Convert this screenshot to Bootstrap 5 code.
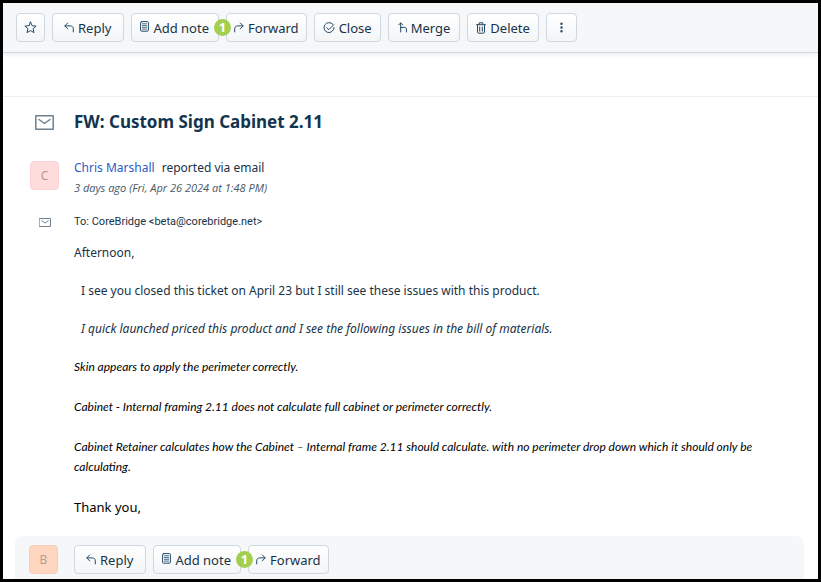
<!DOCTYPE html>
<html lang="en">
<head>
<meta charset="utf-8">
<meta name="viewport" content="width=device-width, initial-scale=1">
<title>FW: Custom Sign Cabinet 2.11</title>
<link href="https://cdn.jsdelivr.net/npm/bootstrap@5.3.0/dist/css/bootstrap.min.css" rel="stylesheet">
<style>
body { font-family: "Noto Sans", "Open Sans", sans-serif; font-size: 12px; line-height: 20px; color: #183247; }
.frame { border: 3px solid #000; }
.toolbar { background: #f5f7f9; border-bottom: 1px solid #cfd7df; box-shadow: 0 2px 4px rgba(24,50,71,.08); padding: 10px 13px; }
.subbar { height: 44px; border-bottom: 1px solid #ebeff3; }
.btn-tool { display: inline-flex; align-items: center; gap: 4px; height: 29px; padding: 0 8px; font-size: 13px; line-height: 20px; color: #183247; background: linear-gradient(#fff, #f3f5f7); border: 1px solid #cfd7df; border-radius: 4px; white-space: nowrap; }
.btn-tool:hover { color: #183247; border-color: #9fb0c0; background: #ebeff3; }
.btn-reply { padding: 0 12px 0 11px; }
.btn-fwd { padding: 0 7px; }
.btn-note { padding-right: 9px; }
.btn-wide { padding: 0 9px; }
.btn-icon { padding: 0 7px; }
.btn-tool svg, .glyph svg { display: block; fill: none; stroke: #264966; stroke-width: 1; stroke-linecap: round; stroke-linejoin: round; }
.btn-note svg { margin-bottom: 2px; }
.tools { gap: 7px; }
.count { position: absolute; right: -12px; top: 6px; z-index: 2; width: 17px; height: 17px; border-radius: 50%; background: #a3cf4e; color: #fff; font-size: 13px; line-height: 17px; font-weight: 700; text-align: center; }
.gutter { width: 29px; }
.ticket { padding: 13px 27px 0; }
.line { gap: 15px; }
.subject { font-size: 17px; line-height: 24px; font-weight: 700; color: #12344d; }
.avatar { width: 29px; height: 29px; border: 1px solid #f8d2d5; border-radius: 4px; background: #ffdcdc; color: #b09a9e; font-size: 12px; }
.avatar-b { border-color: #f5cdb8; background: #ffd7c0; color: #b89e90; }
.person { color: #2c5cc5; text-decoration: none; }
.stamp { font-family: "Open Sans", sans-serif; font-size: 11px; color: #475867; }
.origin { margin-bottom: 14px; }
.origin .gutter { padding-top: 3px; }
.addr { font-family: Roboto, sans-serif; font-size: 11px; margin-bottom: 11px; }
.glyph svg { stroke: #6f8090; }
.message p { margin: 0 0 18px; }
.message p.quoted { font-family: Lato, sans-serif; margin-bottom: 20px; color: #000; }
.message .inset { padding-left: 7px; }
.message p.closing { font-size: 13px; margin-bottom: 19px; color: #000; }
.replybar { background: #f5f7f9; border-radius: 8px 8px 0 0; margin: 0 14px 0 12px; padding: 9px 14px 4px; gap: 16px; }
</style>
</head>
<body>
<svg class="d-none" aria-hidden="true">
  <symbol id="i-reply" viewBox="0 0 10 11"><path d="M3.7 1 .8 3.9l2.9 3M1 3.9h5.2c2 0 3.1 1 3.1 3v3"/></symbol>
  <symbol id="i-note" viewBox="0 0 9 11"><rect x=".6" y=".6" width="7.8" height="9.6" rx="1"/><path stroke-width=".8" d="M2.4 2.8h4.2M2.4 4.6h4.2M2.4 6.3h4.2M2.4 8.1h4.2"/></symbol>
  <symbol id="i-forward" viewBox="0 0 10 11"><path d="m6.3 1 2.9 2.9-2.9 3M9 3.9H3.8c-2 0-3.1 1-3.1 3v3"/></symbol>
</svg>
<div class="frame min-vh-100 d-flex flex-column">
  <header class="toolbar">
    <div class="d-flex flex-wrap tools">
      <button type="button" class="btn btn-tool btn-icon" aria-label="Star"><svg width="13" height="13" viewBox="0 0 13 13"><path d="m6.5 1 1.6 3.7 4 .4-3 2.6.9 3.9-3.5-2-3.5 2 .9-3.9-3-2.6 4-.4z"/></svg></button>
      <button type="button" class="btn btn-tool btn-reply"><svg width="10" height="11"><use href="#i-reply"/></svg>Reply</button>
      <div class="position-relative">
        <button type="button" class="btn btn-tool btn-note"><svg width="9" height="11"><use href="#i-note"/></svg>Add note</button>
        <span class="count">1</span>
      </div>
      <button type="button" class="btn btn-tool btn-fwd"><svg width="10" height="11"><use href="#i-forward"/></svg>Forward</button>
      <button type="button" class="btn btn-tool"><svg width="12" height="12" viewBox="0 0 12 12"><path d="M9.7 2.2A5 5 0 1 0 11 5.6M3.8 5.7l2 2 5-5"/></svg>Close</button>
      <button type="button" class="btn btn-tool btn-wide"><svg width="9" height="11" viewBox="0 0 9 11"><path d="M2.7 10V1M.7 2.9l2-2 2 2M2.7 5.4h4c1.2 0 1.7.5 1.7 1.7V10"/></svg>Merge</button>
      <button type="button" class="btn btn-tool"><svg width="10" height="12" viewBox="0 0 10 12"><path d="M.6 2.7h8.8M3.2 2.5V.8h3.6v1.7M1.5 2.9v7c0 .8.4 1.3 1.2 1.3h4.6c.8 0 1.2-.5 1.2-1.3v-7M3.7 5v4.2M6.3 5v4.2"/></svg>Delete</button>
      <button type="button" class="btn btn-tool btn-wide" aria-label="More"><svg width="11" height="11" viewBox="0 0 11 11"><path stroke-width="2.4" d="M5.5 1.8h.01M5.5 5.5h.01M5.5 9.2h.01"/></svg></button>
    </div>
  </header>
  <div class="subbar"></div>
  <main class="ticket">
    <div class="d-flex line align-items-center mb-4">
      <div class="gutter glyph d-flex justify-content-center"><svg width="19" height="15" viewBox="0 0 19 15"><path stroke-width="1.5" d="M.8.8h17.4v13.4H.8zM4 4.5l5.5 4 5.5-4"/></svg></div>
      <h1 class="subject m-0">FW: Custom Sign Cabinet 2.11</h1>
    </div>
    <div class="d-flex line origin">
      <div class="gutter"><div class="avatar d-flex align-items-center justify-content-center">C</div></div>
      <div>
        <div class="byline"><a href="#" class="person me-1">Chris Marshall</a> reported via email</div>
        <div class="stamp fst-italic">3 days ago (Fri, Apr 26 2024 at 1:48 PM)</div>
      </div>
    </div>
    <div class="d-flex line align-items-center addr">
      <div class="gutter glyph d-flex justify-content-center"><svg width="12" height="9" viewBox="0 0 12 9"><path d="M.5.5h11v8H.5zM2.7 2.7 6 5l3.3-2.3"/></svg></div>
      <div>To: CoreBridge &lt;beta@corebridge.net&gt;</div>
    </div>
    <div class="d-flex line">
      <div class="gutter flex-shrink-0"></div>
      <div class="message">
        <p>Afternoon,</p>
        <p class="inset">I see you closed this ticket on April 23 but I still see these issues with this product.</p>
        <p class="inset fst-italic">I quick launched priced this product and I see the following issues in the bill of materials.</p>
        <p class="quoted fst-italic">Skin appears to apply the perimeter correctly.</p>
        <p class="quoted fst-italic">Cabinet - Internal framing 2.11 does not calculate full cabinet or perimeter correctly.</p>
        <p class="quoted fst-italic">Cabinet Retainer calculates how the Cabinet – Internal frame 2.11 should calculate. with no perimeter drop down which it should only be calculating.</p>
        <p class="closing">Thank you,</p>
      </div>
    </div>
  </main>
  <footer class="replybar d-flex flex-grow-1">
    <div class="avatar avatar-b d-flex align-items-center justify-content-center">B</div>
    <div class="d-flex flex-wrap tools">
      <button type="button" class="btn btn-tool btn-reply"><svg width="10" height="11"><use href="#i-reply"/></svg>Reply</button>
      <div class="position-relative">
        <button type="button" class="btn btn-tool btn-note"><svg width="9" height="11"><use href="#i-note"/></svg>Add note</button>
        <span class="count">1</span>
      </div>
      <button type="button" class="btn btn-tool btn-fwd"><svg width="10" height="11"><use href="#i-forward"/></svg>Forward</button>
    </div>
  </footer>
</div>
<script src="https://cdn.jsdelivr.net/npm/bootstrap@5.3.0/dist/js/bootstrap.bundle.min.js"></script>
</body>
</html>
